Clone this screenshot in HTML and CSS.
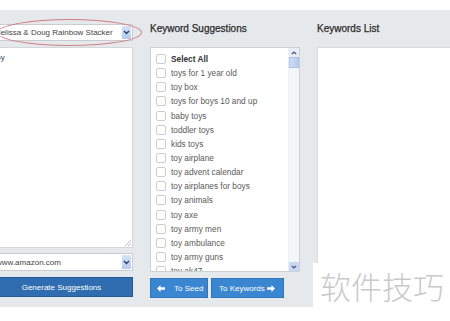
FILE: index.html
```html
<!DOCTYPE html>
<html>
<head>
<meta charset="utf-8">
<link rel="stylesheet" href="styles.css">
</head>
<body>
<div class="topband"></div>
<div class="panel">
  <div class="col left">
    <div class="select top-select">
      <span class="sel-text">Melissa &amp; Doug Rainbow Stacker</span>
      <span class="sel-btn"><svg width="7" height="5" viewBox="0 0 7 5"><path d="M1 1 L3.5 3.5 L6 1" fill="none" stroke="#2b3f73" stroke-width="1.4"/></svg></span>
    </div>
    <div class="textarea">
      <span class="ta-text">toy</span>
      <svg class="resize" width="6" height="6" viewBox="0 0 6 6"><path d="M0 6 L6 0 M3 6 L6 3" stroke="#b9bdc2" stroke-width="1"/></svg>
    </div>
    <div class="select site-select">
      <span class="sel-text">www.amazon.com</span>
      <span class="sel-btn"><svg width="7" height="5" viewBox="0 0 7 5"><path d="M1 1 L3.5 3.5 L6 1" fill="none" stroke="#2b3f73" stroke-width="1.4"/></svg></span>
    </div>
    <button class="btn btn-dark">Generate Suggestions</button>
  </div>
  <div class="col mid">
    <h2 class="heading">Keyword Suggestions</h2>
    <div class="list">
      <ul class="items">
        <li class="bold"><span class="cb"></span>Select All</li>
        <li><span class="cb"></span>toys for 1 year old</li>
        <li><span class="cb"></span>toy box</li>
        <li><span class="cb"></span>toys for boys 10 and up</li>
        <li><span class="cb"></span>baby toys</li>
        <li><span class="cb"></span>toddler toys</li>
        <li><span class="cb"></span>kids toys</li>
        <li><span class="cb"></span>toy airplane</li>
        <li><span class="cb"></span>toy advent calendar</li>
        <li><span class="cb"></span>toy airplanes for boys</li>
        <li><span class="cb"></span>toy animals</li>
        <li><span class="cb"></span>toy axe</li>
        <li><span class="cb"></span>toy army men</li>
        <li><span class="cb"></span>toy ambulance</li>
        <li><span class="cb"></span>toy army guns</li>
        <li><span class="cb"></span>toy ak47</li>
      </ul>
      <div class="scrollbar">
        <span class="sb-btn"><svg width="6" height="4" viewBox="0 0 6 4"><path d="M0.8 3.2 L3 1 L5.2 3.2" fill="none" stroke="#3d4f7a" stroke-width="1.2"/></svg></span>
        <span class="sb-thumb"></span>
        <span class="sb-track"></span>
        <span class="sb-btn sb-down"><svg width="6" height="4" viewBox="0 0 6 4"><path d="M0.8 0.8 L3 3 L5.2 0.8" fill="none" stroke="#3d4f7a" stroke-width="1.2"/></svg></span>
      </div>
    </div>
    <div class="btnrow">
      <button class="btn btn-light seed"><svg width="8" height="7" viewBox="0 0 8 7"><path d="M0 3.5 L3.5 0 L3.5 2.3 L8 2.3 L8 4.7 L3.5 4.7 L3.5 7 Z" fill="#fff"/></svg><span>To Seed</span></button>
      <button class="btn btn-light kw"><span>To Keywords</span><svg width="8" height="7" viewBox="0 0 8 7"><path d="M8 3.5 L4.5 0 L4.5 2.3 L0 2.3 L0 4.7 L4.5 4.7 L4.5 7 Z" fill="#fff"/></svg></button>
    </div>
  </div>
  <div class="col right">
    <h2 class="heading">Keywords List</h2>
    <div class="kwbox"></div>
  </div>
  <div class="ellipse"></div>
</div>
<div class="watermark">软件技巧</div>
</body>
</html>
```

FILE: styles.css
```css
html, body {
  margin: 0;
  padding: 0;
}
body {
  width: 450px;
  height: 321px;
  overflow: hidden;
  background: #ffffff;
  font-family: "Liberation Sans", Arial, sans-serif;
  position: relative;
}
.topband {
  height: 10px;
  background: #ffffff;
}
.panel {
  height: 297px;
  background: #e6e9ec;
  display: flex;
  gap: 17px;
  position: relative;
}
.col {
  display: flex;
  flex-direction: column;
  flex: none;
}
.left {
  width: 143px;
  margin-left: -10px;
  padding-top: 14px;
}
.mid {
  width: 150px;
  padding-top: 13px;
}
.right {
  width: 133px;
  padding-top: 13px;
}
.select {
  height: 17px;
  box-sizing: border-box;
  background: #fff;
  border: 1px solid #c9cdd2;
  display: flex;
  align-items: stretch;
  font-size: 8px;
  color: #444;
}
.sel-text {
  flex: 1;
  display: flex;
  align-items: center;
  padding-left: 3px;
  white-space: nowrap;
  overflow: hidden;
}
.sel-btn {
  width: 9px;
  margin: 1px 1px 1px 0;
  background: linear-gradient(#d6e3f7, #b4caef);
  display: flex;
  align-items: center;
  justify-content: center;
}
.site-select {
  height: 18px;
  margin-top: 5px;
}
.site-select .sel-text {
  padding-left: 5px;
}
.textarea {
  margin-top: 6px;
  height: 201px;
  box-sizing: border-box;
  background: #fff;
  border: 1px solid #d3d6da;
  position: relative;
  font-size: 8px;
  color: #444;
  padding: 5px 3px;
}
.resize {
  position: absolute;
  right: 1px;
  bottom: 1px;
}
.btn {
  border: 1px solid #24589a;
  color: #fff;
  font-family: "Liberation Sans", Arial, sans-serif;
  font-size: 8px;
  padding: 0;
  height: 20px;
  box-sizing: border-box;
}
.btn-dark {
  margin-top: 6px;
  background: #2f6db0;
}
.heading {
  margin: 0 0 12px 0;
  height: 12px;
  line-height: 12px;
  font-size: 10px;
  font-weight: normal;
  color: #2a2a2a;
  -webkit-text-stroke: 0.25px #2a2a2a;
}
.list {
  height: 225px;
  box-sizing: border-box;
  background: #fff;
  border: 1px solid #cbd0d5;
  display: flex;
  overflow: hidden;
}
.items {
  list-style: none;
  margin: 0;
  padding: 4px 0 0 5px;
  flex: 1;
  overflow: hidden;
}
.items li {
  height: 14.15px;
  display: flex;
  align-items: center;
  gap: 5px;
  font-size: 8.3px;
  color: #5a5a5a;
  white-space: nowrap;
}
.items li.bold {
  font-weight: bold;
  color: #333;
}
.cb {
  width: 10px;
  height: 10px;
  box-sizing: border-box;
  border: 1px solid #c9ccd0;
  border-radius: 2px;
  background: #fff;
  flex: none;
}
.scrollbar {
  width: 10px;
  display: flex;
  flex-direction: column;
  background: #f3f5f8;
  border-left: 1px solid #eceff3;
}
.sb-btn {
  height: 9px;
  display: flex;
  align-items: center;
  justify-content: center;
  background: #e9eef6;
}
.sb-thumb {
  height: 11px;
  background: linear-gradient(90deg, #cfdcf3, #b7cbee);
  border: 1px solid #adc2e6;
  box-sizing: border-box;
}
.sb-track {
  flex: 1;
}
.sb-down {
  background: #c9d8f2;
}
.btnrow {
  margin-top: 6px;
  display: flex;
  gap: 3px;
}
.btn-light {
  background: #3a86d1;
  border-color: #2f76bf;
  display: flex;
  align-items: center;
}
.seed {
  width: 58px;
  padding-left: 6px;
  gap: 9px;
}
.kw {
  width: 73px;
  padding-left: 7px;
  gap: 2px;
}
.kwbox {
  height: 225px;
  background: #fff;
  border-left: 1px solid #d6dade;
  border-top: 1px solid #d6dade;
  box-sizing: border-box;
}
.ellipse {
  position: absolute;
  left: -3px;
  top: 9px;
  width: 145px;
  height: 27px;
  box-sizing: border-box;
  border: 1px solid #cf7f86;
  border-radius: 50%;
}
.watermark {
  position: absolute;
  left: 313px;
  top: 263px;
  width: 137px;
  height: 58px;
  box-sizing: border-box;
  background: #fff;
  padding: 7px 0 0 7px;
  font-family: "Noto Sans CJK SC", sans-serif;
  font-size: 31px;
  line-height: 31px;
  color: #cacaca;
  font-weight: 300;
  white-space: nowrap;
}
```
